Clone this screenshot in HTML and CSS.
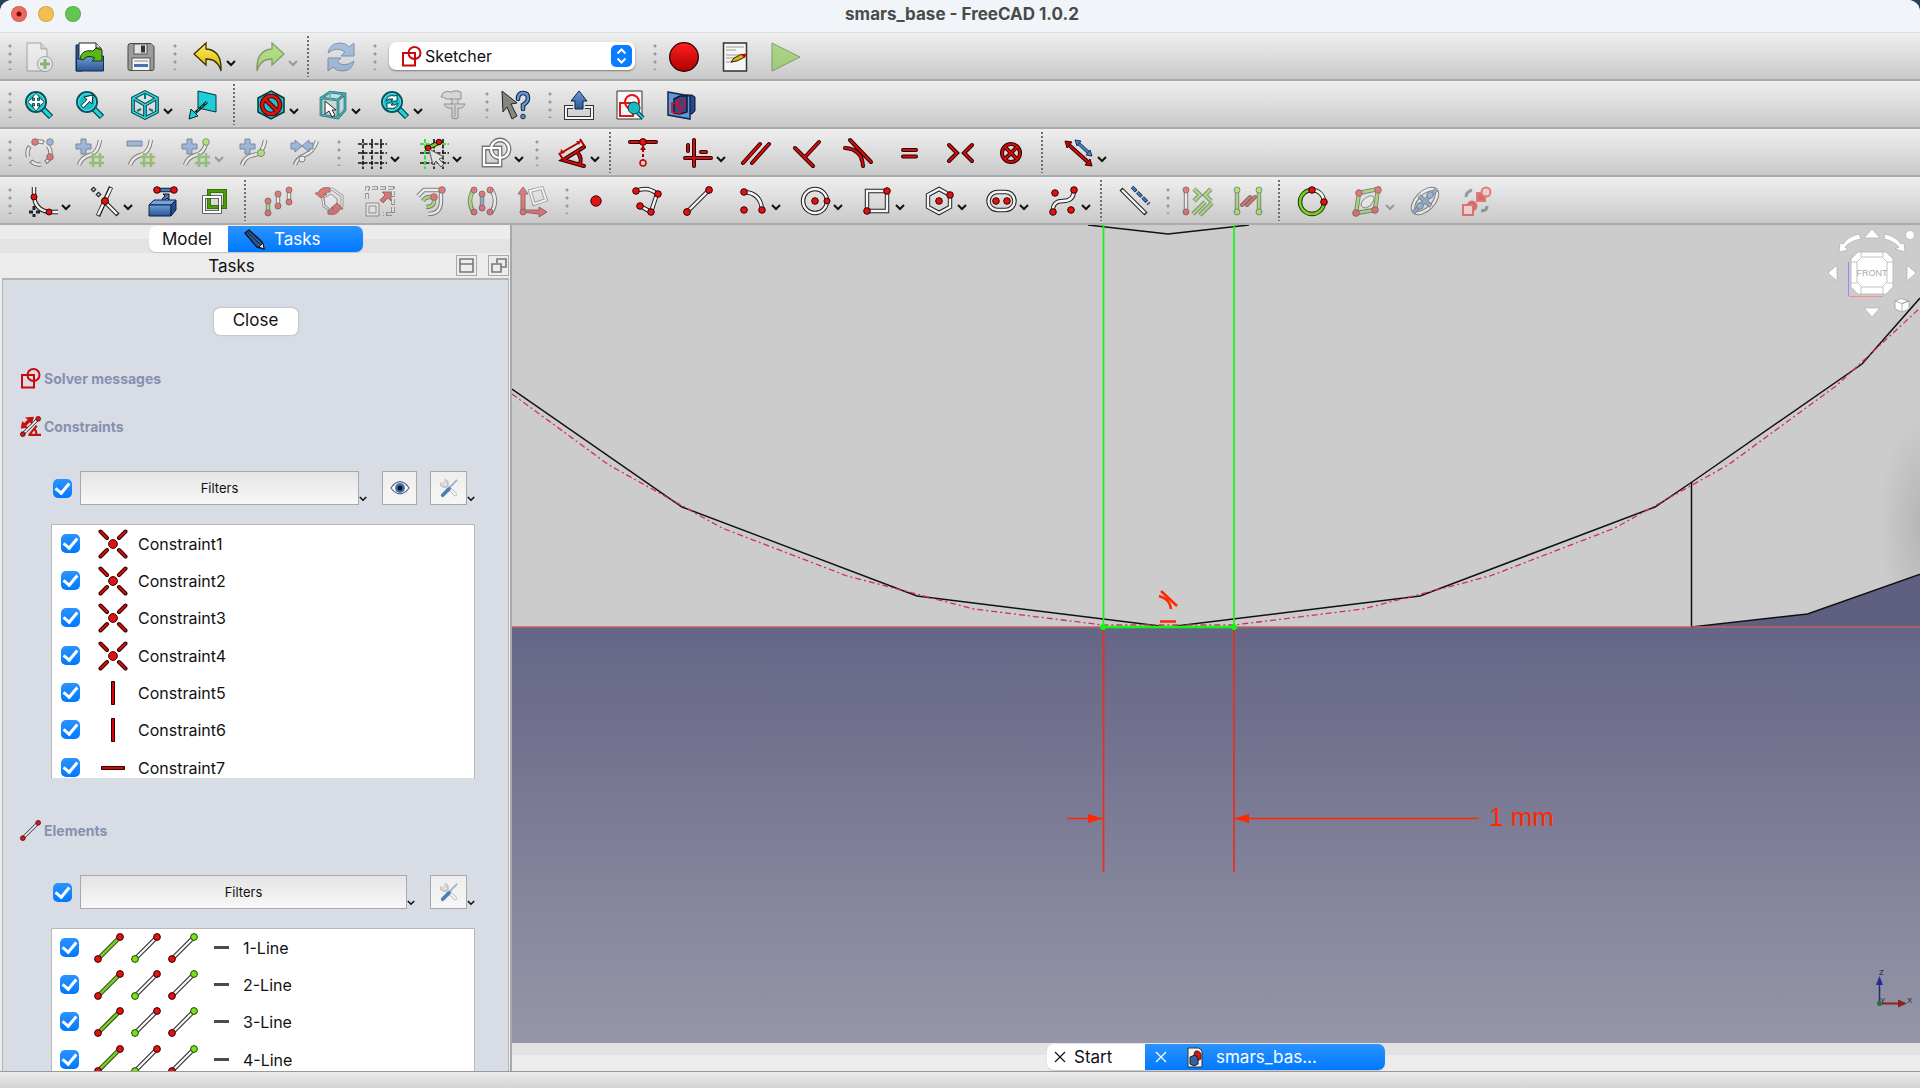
FILE: index.html
```html
<!DOCTYPE html>
<html lang="en">
<head>
<meta charset="utf-8">
<title>smars_base - FreeCAD 1.0.2</title>
<link rel="stylesheet" href="styles.css">
</head>
<body>
<svg class="defs" aria-hidden="true">
  <defs>
    <linearGradient id="red" x1="0" y1="0" x2="0" y2="1"><stop offset="0" stop-color="#ff2020"/><stop offset="1" stop-color="#b00000"/></linearGradient>
    <linearGradient id="yellow" x1="0" y1="0" x2="0" y2="1"><stop offset="0" stop-color="#fcee60"/><stop offset="1" stop-color="#d8b400"/></linearGradient>
    <linearGradient id="blue" x1="0" y1="0" x2="0" y2="1"><stop offset="0" stop-color="#6d9fd8"/><stop offset="1" stop-color="#2c5594"/></linearGradient>
    <linearGradient id="sky" x1="0" y1="0" x2="0" y2="1"><stop offset="0" stop-color="#656586"/><stop offset="1" stop-color="#9696a9"/></linearGradient>
    <radialGradient id="shade"><stop offset="0" stop-color="#b4b4b4"/><stop offset="1" stop-color="#cccccc"/></radialGradient>
  </defs>
  <symbol id="chev" viewBox="0 0 10 7"><path d="M1 1l4 4 4-4" fill="none" stroke="currentColor" stroke-width="2"/></symbol>
  <symbol id="sketcher" viewBox="0 0 21 21"><g fill="none" stroke="#c8090e" stroke-width="2"><path d="M2 7h12v12.500h-12z"/><circle cx="13.500" cy="7" r="6"/></g></symbol>
  <symbol id="i-line" viewBox="0 0 30 30"><path class="k5" d="M4 26L26 4"/><path class="w3" d="M4 26L26 4"/><circle class="dr" cx="4" cy="26" r="3.400"/><circle class="dr" cx="26" cy="4" r="3.400"/></symbol>
  <symbol id="i-edge" viewBox="0 0 30 30"><path class="k5" d="M4 26L26 4"/><path class="g3" d="M4 26L26 4"/><circle class="dr" cx="4" cy="26" r="3.400"/><circle class="dr" cx="26" cy="4" r="3.400"/></symbol>
  <symbol id="i-start" viewBox="0 0 30 30"><path class="k5" d="M4 26L26 4"/><path class="w3" d="M4 26L26 4"/><circle class="dg" cx="4" cy="26" r="3.400"/><circle class="dr" cx="26" cy="4" r="3.400"/></symbol>
  <symbol id="i-end" viewBox="0 0 30 30"><path class="k5" d="M4 26L26 4"/><path class="w3" d="M4 26L26 4"/><circle class="dr" cx="4" cy="26" r="3.400"/><circle class="dg" cx="26" cy="4" r="3.400"/></symbol>
  <symbol id="i-coin" viewBox="0 0 30 30"><path class="k4" d="M2.500 2.500l6.500 6.500M27.500 2.500l-6.500 6.500M2.500 27.500l6.500-6.500M27.500 27.500l-6.500-6.500"/><path class="r2" d="M2.500 2.500l6.500 6.500M27.500 2.500l-6.500 6.500M2.500 27.500l6.500-6.500M27.500 27.500l-6.500-6.500"/><circle class="dr" cx="15" cy="15" r="4.400"/></symbol>
  <symbol id="i-vert" viewBox="0 0 30 30"><path d="M13.500 3.500h3v23h-3z" fill="#d00" stroke="#2a0000"/></symbol>
  <symbol id="i-horz" viewBox="0 0 30 30"><path d="M3.500 13.500h23v3h-23z" fill="#d00" stroke="#2a0000"/></symbol>
  <symbol id="i-tools" viewBox="0 0 22 22"><path d="M6 6l12 12" stroke="#b8b8b8" stroke-width="4" stroke-linecap="round"/><path d="M6 6l12 12" stroke="#f2f2f2" stroke-width="2.500" stroke-linecap="round"/><path d="M2 5a4 4 0 1 0 4-3" fill="none" stroke="#c4c4c4" stroke-width="2"/><path d="M20 2l-9 9" stroke="#9ab4cc" stroke-width="2"/><path d="M11 12l-7 7" stroke="#4c7db8" stroke-width="4" stroke-linecap="round"/></symbol>
  <symbol id="magnifier" viewBox="0 0 30 30"><path d="M18 18l9 9" stroke="#043c40" stroke-width="6"/><path d="M18 18l8.500 8.500" stroke="#20d3dc" stroke-width="3.500"/><circle cx="12" cy="12" r="10" fill="#18bcc6" stroke="#06565c" stroke-width="2"/><circle cx="12" cy="12" r="8.500" fill="none" stroke="#5ee6ea"/></symbol>
</svg>

<div class="window">
<header class="titlebar">
  <div class="lights"><button class="light close" aria-label="Close window"></button><button class="light min" aria-label="Minimize"></button><button class="light max" aria-label="Zoom"></button></div>
  <h1>smars_base - FreeCAD 1.0.2</h1>
</header>

<nav class="toolbars">
  <div class="bar">
    <i class="handle"></i>
    <button class="tool" aria-label="New"><svg class="off" viewBox="0 0 30 30"><path d="M3 1h14l6 6v22h-20z" fill="#f6f6f6" stroke="#666"/><path d="M17 1v6h6" fill="#ccc" stroke="#666"/><circle cx="21" cy="22" r="7.500" fill="#f4f4f4" stroke="#666"/><path d="M21 17v10M16 22h10" stroke="#4b8a22" stroke-width="3"/></svg></button>
    <button class="tool" aria-label="Open"><svg viewBox="0 0 30 30"><path d="M1 3h6v26h-6z" fill="#2a5695" stroke="#0c2b52"/><path d="M4 1h17l5 5v14h-22z" fill="#fff" stroke="#222"/><path d="M21 1v5h5" fill="#ddd" stroke="#222"/><path d="M1.500 29v-12h8l2-3h17v15z" fill="url(#blue)" stroke="#0f2d5a"/><path d="M5 17q1-10 13-8l3-3 6 2v11h-10l3-3q-8-4-12 2z" fill="#5cb615" stroke="#173c00"/></svg></button>
    <button class="tool" aria-label="Save"><svg viewBox="0 0 30 30"><path d="M2 4q0-2.500 2.500-2.500h20.500l3 3v22q0 2-2 2h-22q-2 0-2-2z" fill="#9b9e98" stroke="#444"/><rect x="8" y="2" width="13" height="10" fill="#e3e3e3" stroke="#555"/><rect x="15" y="3.500" width="4" height="7" fill="#333"/><rect x="6" y="16" width="18" height="12.500" fill="#f4f4f4" stroke="#555"/><path d="M8 19h14" stroke="#888"/><path d="M8 23.500h14" stroke="#4673b0" stroke-width="3"/></svg></button>
    <i class="handle"></i>
    <button class="tool menu" aria-label="Undo"><svg viewBox="0 0 30 30"><path d="M1 12L13 1v6q16 1 15 22-3-12-15-12v6z" fill="url(#yellow)" stroke="#3a3000" stroke-width="1.300"/></svg><svg class="chev"><use href="#chev"/></svg></button>
    <button class="tool menu" aria-label="Redo"><svg class="off" viewBox="0 0 30 30"><path d="M29 12L17 1v6Q1 8 2 29q3-12 15-12v6z" fill="#7edb26" stroke="#2b5a05" stroke-width="1.300"/></svg><svg class="chev off"><use href="#chev"/></svg></button>
    <i class="sep"></i>
    <button class="tool" aria-label="Refresh"><svg class="off" viewBox="0 0 30 30"><path d="M2 11Q4 1 14 1q6 0 9 4l5-4v13h-13l4-4Q11 4 2 11zM28 19q-2 10-12 10-6 0-9-4l-5 4v-13h13l-4 4q8 6 17-1z" fill="#6d9ad0" stroke="#1d4a87"/></svg></button>
    <i class="handle"></i>
    <div class="combo"><svg class="ic21"><use href="#sketcher"/></svg><select aria-label="Workbench"><option>Sketcher</option></select><svg class="stepper" viewBox="0 0 21 22"><rect width="21" height="22" rx="5" fill="#0a7cff"/><path d="M6.500 8.500l4-4 4 4M6.500 13.500l4 4 4-4" fill="none" stroke="#fff" stroke-width="2"/></svg></div>
    <i class="handle"></i>
    <button class="tool" aria-label="Record macro"><svg viewBox="0 0 30 30"><circle cx="15" cy="15" r="14.300" fill="url(#red)" stroke="#280000" stroke-width="1.300"/></svg></button>
    <button class="tool" aria-label="Macros"><svg viewBox="0 0 30 30"><rect x="3.500" y="1" width="23" height="28" fill="#f5f5f3" stroke="#333" stroke-width="1.500"/><path d="M6 5h18M6 8h10M6 13h18M6 16h12M6 20h7" stroke="#999"/><path d="M11 20l3-4 8-4 3 3-8 4z" fill="#e0b400" stroke="#222"/><path d="M21 12.500l4-1 2 2-3 2z" fill="#c00"/></svg></button>
    <button class="tool" aria-label="Execute macro"><svg class="off" viewBox="0 0 30 30"><path d="M1 1v28l28-14z" fill="#73c52a" stroke="#2a5a06"/></svg></button>
  </div>

  <div class="bar">
    <i class="handle"></i>
    <button class="tool" aria-label="Fit all"><svg viewBox="0 0 30 30"><use href="#magnifier"/><path d="M12 3l4 5h-2.500v2.500h2v-2.500l5 4-5 4v-2.500h-2v2.500h2.500l-4 5-4-5h2.500v-2.500h-2v2.500l-5-4 5-4v2.500h2v-2.500h-2.500z" fill="#fff" stroke="#033" stroke-width=".8"/></svg></button>
    <button class="tool" aria-label="Fit selection"><svg viewBox="0 0 30 30"><use href="#magnifier"/><path d="M18 5l-1 9-2.500-2.500-6 6.500-2.500-2.500 6-6-3-2.500z" fill="#fff" stroke="#022"/></svg></button>
    <button class="tool menu" aria-label="Standard views"><svg viewBox="0 0 30 30"><g fill="none" stroke="#033c42" stroke-width="3.600"><path d="M15 2l12 6v14l-12 6-12-6v-14zM3 8l12 7 12-7M15 15v13"/></g><g fill="none" stroke="#2cd0d8" stroke-width="1.600"><path d="M15 2l12 6v14l-12 6-12-6v-14zM3 8l12 7 12-7M15 15v13"/></g><path d="M15 3v6M7 21l4-2M23 21l-4-2" stroke="#067a82" stroke-width="2"/></svg><svg class="chev"><use href="#chev"/></svg></button>
    <button class="tool" aria-label="Align to selection"><svg viewBox="0 0 30 30"><path d="M10 1l18 4v17l-18-4z" fill="#1fcdd6" stroke="#034"/><path d="M19 12L7 23" stroke="#022" stroke-width="3"/><path d="M19 12L7 23" stroke="#2dd" stroke-dasharray="3 2"/><path d="M1 29l2-10 7 7z" fill="#1fcdd6" stroke="#022"/></svg></button>
    <i class="sep"></i>
    <button class="tool menu" aria-label="Draw style"><svg viewBox="0 0 30 30"><path d="M15 1l13 7v14l-13 7-13-7v-14z" fill="#1cc2cc" stroke="#02363a" stroke-width="1.500"/><g fill="none"><circle cx="15" cy="15" r="9" stroke="#3a0000" stroke-width="4.600"/><path d="M9 9l12 12" stroke="#3a0000" stroke-width="4.600"/><circle cx="15" cy="15" r="9" stroke="#e01010" stroke-width="2.800"/><path d="M9 9l12 12" stroke="#e01010" stroke-width="2.800"/></g></svg><svg class="chev"><use href="#chev"/></svg></button>
    <button class="tool menu" aria-label="Bounding box"><svg viewBox="0 0 30 30"><path d="M3 8l9-6 15 2v16l-7 8-17-3z" fill="#b4d4d4" opacity=".5"/><g fill="none" stroke="#245c60" stroke-width="2.600"><path d="M3 8l9-6 15 2v16l-7 8-17-3zM3 8l17 2 7-6M20 10v18"/></g><g fill="none" stroke="#43b4ba" stroke-width="1.400"><path d="M3 8l9-6 15 2v16l-7 8-17-3zM3 8l17 2 7-6M20 10v18M12 2v8"/></g><path d="M7 11l11 9h-4l3 5-3 2-3-6-4 3z" fill="#fff" stroke="#222"/></svg><svg class="chev"><use href="#chev"/></svg></button>
    <button class="tool menu" aria-label="Zoom tools"><svg viewBox="0 0 30 30"><use href="#magnifier"/><path d="M6 11q2-7 9-5l2-1v6h-6l2-2q-4-1-7 2zM18 13q-2 7-9 5l-2 1v-6h6l-2 2q4 1 7-2z" fill="#fff" stroke="#044"/></svg><svg class="chev"><use href="#chev"/></svg></button>
    <button class="tool" aria-label="Measure"><svg class="off" viewBox="0 0 30 30"><path d="M5 3q4-3 8-1h2v-1h6v1h2v7h-3v5h7q-2 5-7 4v10l-2 1-4-1v-10q-6 1-8-4h8v-5h-6q-2-2-5-2z" fill="#ccc" stroke="#444"/><path d="M12 9h8M12 14h8M17 15v12" stroke="#555"/></svg></button>
    <i class="handle"></i>
    <button class="tool" aria-label="What's this"><svg viewBox="0 0 30 30"><path d="M1 1l15 12-6 1 6 12-5 3-5-12-4 5z" fill="#85877f" stroke="#222"/><g fill="none" stroke-linecap="round"><path d="M17 9q0-6 5-6t5 5q0 4-5 7v4" stroke="#122c50" stroke-width="4.600"/><path d="M17 9q0-6 5-6t5 5q0 4-5 7v4" stroke="#6c97d0" stroke-width="2.400"/></g><circle cx="22" cy="26.500" r="2.300" fill="#5a8ac8" stroke="#122c50"/></svg></button>
    <i class="handle"></i>
    <button class="tool" aria-label="Leave sketch"><svg viewBox="0 0 30 30"><path d="M9 17h-7v11h26v-11h-7" fill="none" stroke="#333" stroke-width="4"/><path d="M9 17h-7v11h26v-11h-7" fill="none" stroke="#f5f5f5" stroke-width="2"/><path d="M15 1l8 10h-4v8h-8v-8h-4z" fill="url(#blue)" stroke="#0b2448"/></svg></button>
    <button class="tool" aria-label="View sketch"><svg viewBox="0 0 30 30"><path d="M2 1h25v28h-25z" fill="#f7f7f7" stroke="#333"/><g fill="none" stroke="#e01515" stroke-width="2"><circle cx="17" cy="12" r="7"/><path d="M5 13h13v13h-13z"/></g><path d="M21 21l7 7" stroke="#033" stroke-width="4"/><path d="M21 21l7 7" stroke="#2cd" stroke-width="2"/><circle cx="19" cy="18" r="6" fill="#1bb8c2" stroke="#044"/></svg></button>
    <button class="tool" aria-label="View section"><svg viewBox="0 0 30 30"><path d="M20 5h6l3 2v14l-3 3h-6z" fill="#22488a" stroke="#0a1a38"/><path d="M2 2l22 4v23l-22-4z" fill="#6497d2" stroke="#0e2a50" stroke-width="1.500"/><path d="M8 9l6-3h7v16l-7 2-6-1z" fill="#2a4f91" stroke="#0a1a38" stroke-width="1.500"/><g fill="none" stroke="#d0102a" stroke-width="1.700"><path d="M6 13l8 1v9l-8-1z"/><ellipse cx="15" cy="14" rx="4" ry="5"/></g></svg></button>
  </div>

  <div class="bar">
    <i class="handle"></i>
    <button class="tool" aria-label="B-spline convert"><svg class="off" viewBox="0 0 30 30"><circle class="k5" cx="15" cy="15" r="11.500" stroke-dasharray="11 5"/><circle class="w3" cx="15" cy="15" r="11.500" stroke-dasharray="10 6"/><circle class="dr" cx="11" cy="4" r="3.300"/><circle class="db" cx="26" cy="4" r="3.300"/><circle class="dr" cx="26" cy="19" r="3.300"/></svg></button>
    <button class="tool" aria-label="Increase degree"><svg class="off" viewBox="0 0 30 30"><path class="k5" d="M4 27q3-8 11-10t10-15"/><path class="w3" d="M4 27q3-8 11-10t10-15"/><path class="bl" d="M6 1h5v5h5v5h-5v5h-5v-5h-5v-5h5z"/><path class="hash" d="M18 15v14M25 15v14M14 19h15M14 25h15"/></svg></button>
    <button class="tool" aria-label="Decrease degree"><svg class="off" viewBox="0 0 30 30"><path class="k5" d="M4 27q3-8 11-10t10-15"/><path class="w3" d="M4 27q3-8 11-10t10-15"/><path class="bl" d="M1 3h15v5h-15z"/><path class="hash" d="M18 15v14M25 15v14M14 19h15M14 25h15"/></svg></button>
    <button class="tool menu" aria-label="Increase multiplicity"><svg class="off" viewBox="0 0 30 30"><path class="k5" d="M4 27q3-8 11-10t10-12"/><path class="w3" d="M4 27q3-8 11-10t10-12"/><path class="bl" d="M6 1h5v5h5v5h-5v5h-5v-5h-5v-5h5z"/><circle class="dg" cx="25" cy="4" r="3.300"/><path class="hash" d="M18 15v14M25 15v14M14 19h15M14 25h15"/></svg><svg class="chev off"><use href="#chev"/></svg></button>
    <button class="tool" aria-label="Insert knot"><svg class="off" viewBox="0 0 30 30"><path class="k5" d="M3 27q3-9 12-10t11-15"/><path class="w3" d="M3 27q3-9 12-10t11-15"/><path class="bl" d="M6 1h5v5h5v5h-5v5h-5v-5h-5v-5h5z"/><circle class="dg" cx="22" cy="15" r="3.600"/></svg></button>
    <button class="tool" aria-label="Join curves"><svg class="off" viewBox="0 0 30 30"><path class="k5" d="M5 27q2-7 10-10t12-14"/><path class="w3" d="M5 27q2-7 10-10t12-14"/><path class="bl" d="M1 5h4v-3l7 6-7 6v-3h-4zM23 5h-4v-3l-7 6 7 6v-3h4z"/><circle cx="12" cy="21" r="3" fill="#fff" stroke="#333"/></svg></button>
    <i class="handle"></i>
    <button class="tool menu" aria-label="Toggle grid"><svg viewBox="0 0 30 30"><path d="M6 1v30M15 1v30M24 1v30M1 6h29M1 15h29M1 25h29" stroke="#111" stroke-width="1.600" stroke-dasharray="4 1.500"/></svg><svg class="chev"><use href="#chev"/></svg></button>
    <button class="tool menu" aria-label="Toggle snap"><svg viewBox="0 0 30 30"><path d="M15 1v30M24 1v30M1 15h29M1 25h29" stroke="#111" stroke-width="1.600" stroke-dasharray="4 1.500"/><path d="M6 1v30M1 6h29" stroke="#10e010" stroke-width="1.600" stroke-dasharray="4 1.500"/><path class="k5" d="M9 10l10-5"/><path class="g3" d="M9 10l10-5"/><circle class="dr" cx="9" cy="10" r="2.800"/><circle class="dr" cx="20" cy="4" r="2.800"/><path d="M10 11l15 8-5 2 5 5-3 3-5-6-3 4z" fill="#e0e0da" stroke="#555"/></svg><svg class="chev"><use href="#chev"/></svg></button>
    <button class="tool menu" aria-label="Rendering order"><svg viewBox="0 0 30 30"><g fill="none" stroke="#777" stroke-width="4.800"><path d="M3 10h16v17h-16z"/><circle cx="19" cy="11" r="9"/></g><g fill="none" stroke="#fff" stroke-width="2.200"><path d="M3 10h16v17h-16z"/><circle cx="19" cy="11" r="9"/></g></svg><svg class="chev"><use href="#chev"/></svg></button>
    <i class="handle"></i>
    <button class="tool menu wide" aria-label="Dimension"><svg viewBox="0 0 30 30"><path class="k4" d="M27 9L6 22l21 6M21 15q4 5 2 11"/><path class="r2" d="M27 9L6 22l21 6M21 15q4 5 2 11"/><path d="M2 15l5 8M23 1l5 8M4 15l19-11" fill="none" stroke="#a00" stroke-width="2"/><path d="M3 16l1-5 4 4zM24 3l-5 0 3 4z" fill="#c00"/></svg><svg class="chev"><use href="#chev"/></svg></button>
    <i class="sep"></i>
    <button class="tool" aria-label="Point on object"><svg viewBox="0 0 30 30"><path class="k4" d="M2 4h26"/><path class="r2" d="M2 4h26"/><circle class="dr" cx="15" cy="4" r="3.400"/><path d="M15 11v11" stroke="#a00" stroke-width="2" stroke-dasharray="3 2"/><path d="M12 12l3-5 3 5z" fill="#a00"/><circle cx="15" cy="25" r="3" fill="none" stroke="#c00" stroke-width="1.500"/></svg></button>
    <button class="tool menu" aria-label="Horizontal or vertical"><svg viewBox="0 0 30 30"><path class="k4" d="M11 2v26M2 20h26M5 7v6M18 14h5"/><path class="r2" d="M11 2v26M2 20h26M5 7v6M18 14h5"/></svg><svg class="chev"><use href="#chev"/></svg></button>
    <button class="tool" aria-label="Parallel"><svg viewBox="0 0 30 30"><path class="k4" d="M2 25L19 6M11 25L28 6"/><path class="r2" d="M2 25L19 6M11 25L28 6"/></svg></button>
    <button class="tool" aria-label="Perpendicular"><svg viewBox="0 0 30 30"><path class="k4" d="M3 10l18 18M13 19L27 4"/><path class="r2" d="M3 10l18 18M13 19L27 4"/></svg></button>
    <button class="tool" aria-label="Tangent"><svg viewBox="0 0 30 30"><path class="k4" d="M7 2l21 22M2 10q17 1 18 18"/><path class="r2" d="M7 2l21 22M2 10q17 1 18 18"/></svg></button>
    <button class="tool" aria-label="Equal"><svg viewBox="0 0 30 30"><path class="k4" d="M9 12h13M9 18.500h13"/><path class="r2" d="M9 12h13M9 18.500h13"/></svg></button>
    <button class="tool" aria-label="Symmetric"><svg viewBox="0 0 30 30"><path class="k4" d="M4 7l8 8-8 8M27 7l-8 8 8 8"/><path class="r2" d="M4 7l8 8-8 8M27 7l-8 8 8 8"/></svg></button>
    <button class="tool" aria-label="Block"><svg viewBox="0 0 30 30"><path class="k4" d="M9 9l12 12M21 9L9 21"/><circle class="k4" cx="15" cy="15" r="9"/><path class="r2" d="M9 9l12 12M21 9L9 21"/><circle class="r2" cx="15" cy="15" r="9"/></svg></button>
    <i class="sep"></i>
    <button class="tool menu" aria-label="Toggle driving constraint"><svg viewBox="0 0 30 30"><path class="k4" d="M5 7l20 18"/><path class="r2" d="M5 7l20 18"/><path d="M1 3l7 1-5 6zM28 28l-7-1 5-6z" fill="#c00" stroke="#300"/><path d="M14 5l11 10" stroke="#16345f" stroke-width="3.500"/><path d="M14 5l11 10" stroke="#4d82c4" stroke-width="1.800"/><path d="M11 2l6 1-4 5zM28 18l-6-1 4-5z" fill="#4d82c4" stroke="#16345f"/></svg><svg class="chev"><use href="#chev"/></svg></button>
  </div>

  <div class="bar">
    <i class="handle"></i>
    <button class="tool menu" aria-label="Fillet"><svg viewBox="0 0 30 30"><path class="k5" d="M6 1v9q1 14 15 16h9"/><path class="w3" d="M6 1v9q1 14 15 16h9"/><path d="M1 26h4M8 26h4M6 20v4M6 28v3" stroke="#222" stroke-width="3"/><circle class="dr" cx="6" cy="11" r="3"/><circle class="dr" cx="21" cy="26" r="3"/></svg><svg class="chev"><use href="#chev"/></svg></button>
    <button class="tool menu" aria-label="Trim"><svg viewBox="0 0 30 30"><path class="k5" d="M21 1L8 30M14 15l14 14M2 2l3 3M7 7l3 3"/><path class="w3" d="M21 2L8 29M14 15l13 13M3 3l1 1M8 8l1 1"/><circle class="dr" cx="15" cy="15" r="3.500"/></svg><svg class="chev"><use href="#chev"/></svg></button>
    <button class="tool" aria-label="External geometry"><svg viewBox="0 0 30 30"><path class="k5" d="M10 4h16"/><path class="b3" d="M10 4h16"/><circle class="dr" cx="9" cy="4" r="3.300"/><circle class="dr" cx="26" cy="4" r="3.300"/><path d="M14 13l3-3-2-2h6v6l-2-2-3 3z" fill="#4a7cc0" stroke="#112"/><path d="M1 19l5-5h22l-5 5z" fill="#73a3dc" stroke="#0b2448"/><path d="M1 19h22v11h-22z" fill="url(#blue)" stroke="#0b2448"/><path d="M23 19l5-5v10l-5 6z" fill="#234c88" stroke="#0b2448"/></svg></button>
    <button class="tool" aria-label="Carbon copy"><svg viewBox="0 0 30 30"><path d="M10 5h16v16h-16z" fill="none" stroke="#2c6a05" stroke-width="4"/><path d="M10 5h16v16h-16z" fill="none" stroke="#4c9a06" stroke-width="2.600"/><path d="M5 11h16v15h-16z" fill="none" stroke="#444" stroke-width="3.600"/><path d="M5 11h16v15h-16z" fill="none" stroke="#fff" stroke-width="2"/></svg></button>
    <i class="sep"></i>
    <button class="tool" aria-label="Move"><svg class="off" viewBox="0 0 30 30"><path class="k5" d="M5 26v-11M15 19v-11M26 15v-11"/><path class="g3" d="M5 26v-11"/><path class="w3" d="M15 19v-11M26 15v-11"/><circle class="dr" cx="5" cy="27" r="3"/><circle class="dr" cx="5" cy="15" r="3"/><circle class="dr" cx="15" cy="20" r="3"/><circle class="dr" cx="15" cy="8" r="3"/><circle class="dr" cx="26" cy="16" r="3"/><circle class="dr" cx="26" cy="4" r="3"/></svg></button>
    <button class="tool" aria-label="Rotate"><svg class="off" viewBox="0 0 30 30"><path d="M8 8l10-5 10 7v10l-10 5-8-5z" fill="none" stroke="#555" stroke-width="3"/><path d="M8 8l10-5 10 7v10l-10 5-8-5z" fill="none" stroke="#fff" stroke-width="1.200"/><path d="M10 12l7-4 6 5v7l-7 3-5-4z" fill="#eee" stroke="#444"/><path d="M4 7q3-7 12-5v4q-5-1-6 2h3l-6 4-6-5zM26 23q-3 7-12 5v-4q5 1 6-2h-3l6-5 6 6z" fill="#e01010" stroke="#400"/></svg></button>
    <button class="tool" aria-label="Scale"><svg class="off" viewBox="0 0 30 30"><path d="M2 13v-11h26v26h-10" fill="none" stroke="#333" stroke-width="3.500" stroke-dasharray="6 2"/><path d="M2 13v-11h26v26h-10" fill="none" stroke="#fff" stroke-width="1.700" stroke-dasharray="5 3"/><path d="M1 17h13v13h-13zM4 20h7v7h-7z" fill="#eee" stroke="#444"/><path d="M15 14l5-5-3-3h9v9l-3-3-5 5z" fill="#d01010" stroke="#400"/></svg></button>
    <button class="tool" aria-label="Offset"><svg class="off" viewBox="0 0 30 30"><path class="k5" d="M2 10l6-6h17v11q0 13-13 13"/><path class="w3" d="M2 10l6-6h17v11q0 13-13 13"/><path class="k5" d="M7 15q2-4 7-4h4v4q0 6-8 6"/><path class="g3" d="M7 15q2-4 7-4h4v4q0 6-8 6"/><circle class="dr" cx="26" cy="4" r="3.300"/><circle class="dr" cx="18" cy="11" r="3.300"/></svg></button>
    <button class="tool" aria-label="Symmetry"><svg class="off" viewBox="0 0 30 30"><path class="k5" d="M7 3q-8 12 0 24M24 3q8 12 0 24M15 8v14"/><path class="g3" d="M7 3q-8 12 0 24"/><path class="w3" d="M24 3q8 12 0 24"/><path class="b3" d="M15 8v14"/><circle class="dr" cx="7" cy="4" r="3"/><circle class="dr" cx="7" cy="26" r="3"/><circle class="dr" cx="23" cy="4" r="3"/><circle class="dr" cx="23" cy="26" r="3"/><circle class="dr" cx="15" cy="8" r="3"/><circle class="dr" cx="15" cy="22" r="3"/></svg></button>
    <button class="tool" aria-label="Axes alignment"><svg class="off" viewBox="0 0 30 30"><path d="M3 26v-18h-3l5-7 5 7h-3v16h14v-3l8 5-8 5v-3z" fill="#e01515" stroke="#400"/><path d="M12 5l12-3 4 12-12 4z" fill="none" stroke="#444" stroke-width="3.500"/><path d="M12 5l12-3 4 12-12 4z" fill="none" stroke="#fff" stroke-width="2"/><circle class="dr" cx="5" cy="26" r="3"/></svg></button>
    <i class="handle"></i>
    <button class="tool" aria-label="Point"><svg viewBox="0 0 30 30"><circle class="dr" cx="15" cy="15" r="5.200"/></svg></button>
    <button class="tool" aria-label="Polyline"><svg viewBox="0 0 30 30"><path class="k5" d="M4 5q12-5 21 3l-6 18-11-6"/><path class="w3" d="M4 5q12-5 21 3l-6 18-11-6"/><circle class="dr" cx="4" cy="5" r="3.300"/><circle class="dr" cx="26" cy="8" r="3.300"/><circle class="dr" cx="19" cy="26" r="3.300"/><circle class="dr" cx="8" cy="20" r="3.300"/></svg></button>
    <button class="tool" aria-label="Line"><svg><use href="#i-line"/></svg></button>
    <button class="tool menu" aria-label="Arc"><svg viewBox="0 0 30 30"><path class="k5" d="M6 6q17 1 18 18"/><path class="w3" d="M6 6q17 1 18 18"/><circle class="dr" cx="6" cy="6" r="3.300"/><circle class="dr" cx="6" cy="24" r="3.300"/><circle class="dr" cx="24" cy="24" r="3.300"/></svg><svg class="chev"><use href="#chev"/></svg></button>
    <button class="tool menu" aria-label="Circle"><svg viewBox="0 0 30 30"><circle class="k5" cx="15" cy="15" r="12"/><circle class="w3" cx="15" cy="15" r="12"/><circle class="dr" cx="15" cy="15" r="3.300"/><circle class="dr" cx="27" cy="15" r="3"/></svg><svg class="chev"><use href="#chev"/></svg></button>
    <button class="tool menu" aria-label="Rectangle"><svg viewBox="0 0 30 30"><path class="k5" d="M5 5h20v20h-20z"/><path class="w3" d="M5 5h20v20h-20z"/><circle class="dr" cx="25" cy="5" r="3.300"/><circle class="dr" cx="5" cy="25" r="3.300"/></svg><svg class="chev"><use href="#chev"/></svg></button>
    <button class="tool menu" aria-label="Polygon"><svg viewBox="0 0 30 30"><path class="k5" d="M15 3l11 6v12l-11 6-11-6v-12z"/><path class="w3" d="M15 3l11 6v12l-11 6-11-6v-12z"/><circle class="dr" cx="15" cy="15" r="3.300"/><circle class="dr" cx="26" cy="9" r="3.300"/></svg><svg class="chev"><use href="#chev"/></svg></button>
    <button class="tool menu" aria-label="Slot"><svg viewBox="0 0 30 30"><rect class="k5" x="2.500" y="6" width="26" height="18" rx="9"/><rect class="w3" x="2.500" y="6" width="26" height="18" rx="9"/><circle class="dr" cx="10" cy="15" r="3.300"/><circle class="dr" cx="21" cy="15" r="3.300"/></svg><svg class="chev"><use href="#chev"/></svg></button>
    <button class="tool menu" aria-label="B-spline"><svg viewBox="0 0 30 30"><path class="k5" d="M5 26q-1-11 10-11t11-11"/><path class="w3" d="M5 26q-1-11 10-11t11-11"/><circle class="dr" cx="5" cy="26" r="3.300"/><circle class="dr" cx="7" cy="7" r="3.300"/><circle class="dr" cx="26" cy="4" r="3.300"/><circle class="dr" cx="23" cy="24" r="3.300"/></svg><svg class="chev"><use href="#chev"/></svg></button>
    <i class="sep"></i>
    <button class="tool" aria-label="Toggle construction"><svg viewBox="0 0 30 30"><path class="k5" d="M2 3l25 25"/><path class="w3" d="M3 4l23 23"/><path d="M13 1l17 17" stroke="#12294d" stroke-width="3.500" stroke-dasharray="6 1.500"/><path d="M13 1l17 17" stroke="#4a7cc0" stroke-width="2" stroke-dasharray="5 2.500"/></svg></button>
    <i class="handle"></i>
    <button class="tool" aria-label="Select constraints"><svg class="off" viewBox="0 0 30 30"><path class="k5" d="M4 4v23M12 3l6 6-6 6M29 3l-6 6 6 6M11 28l12-12M18 29l12-12"/><path class="w3" d="M4 4v23"/><path class="g3" d="M12 3l6 6-6 6M29 3l-6 6 6 6M11 28l12-12M18 29l12-12"/><circle class="dr" cx="4" cy="4" r="3"/><circle class="dr" cx="4" cy="26" r="3"/></svg></button>
    <button class="tool" aria-label="Select associated geometry"><svg class="off" viewBox="0 0 30 30"><path class="k5" d="M4 4v23M26 4v23"/><path class="g3" d="M4 4v23M26 4v23"/><path class="k4" d="M9 19l8-8M14 19l8-8"/><path class="r2" d="M9 19l8-8M14 19l8-8"/><circle class="dg" cx="4" cy="4" r="3"/><circle class="dg" cx="4" cy="26" r="3"/><circle class="dg" cx="26" cy="4" r="3"/><circle class="dg" cx="26" cy="26" r="3"/></svg></button>
    <i class="sep"></i>
    <button class="tool" aria-label="Select unconstrained"><svg viewBox="0 0 30 30"><circle class="k5" cx="15" cy="16" r="12"/><circle class="g3" cx="15" cy="16" r="12"/><path class="w3" d="M17 4q9 2 10 11"/><circle class="dr" cx="15" cy="4" r="3.300"/><circle class="dr" cx="27" cy="16" r="3.300"/></svg></button>
    <button class="tool menu" aria-label="Internal geometry"><svg class="off" viewBox="0 0 30 30"><path class="k5" d="M7 7l19-4-3 21-19 3z"/><path class="g3" d="M7 7l19-4-3 21-19 3z"/><path d="M9 19q0-5 8-9 6-1 5 4-2 6-8 8-4 0-5-3z" fill="#eee" stroke="#333"/><circle class="dr" cx="7" cy="7" r="3.300"/><circle class="dr" cx="26" cy="4" r="3.300"/><circle class="dr" cx="23" cy="24" r="3.300"/><circle class="dr" cx="4" cy="27" r="3.300"/></svg><svg class="chev off"><use href="#chev"/></svg></button>
    <button class="tool" aria-label="Ellipse geometry"><svg class="off" viewBox="0 0 30 30"><ellipse class="k5" cx="15" cy="15" rx="15" ry="8" transform="rotate(-45 15 15)"/><ellipse class="w3" cx="15" cy="15" rx="15" ry="8" transform="rotate(-45 15 15)"/><path class="k5" d="M3 27L27 3M9 10l12 10"/><path class="b3" d="M3 27L27 3M9 10l12 10"/><circle class="db" cx="10" cy="20" r="3.300"/><circle class="db" cx="20" cy="9" r="3.300"/></svg></button>
    <button class="tool" aria-label="Switch space"><svg class="off" viewBox="0 0 30 30"><path d="M16 7h8v8h-8z" fill="#c00" stroke="#e01515" stroke-width="2"/><circle cx="25" cy="6" r="4.500" fill="#fbb" stroke="#e01515" stroke-width="2"/><circle cx="11" cy="20" r="5" fill="#c00" stroke="#e01515"/><path d="M2 19h10v10h-10z" fill="#fcc" stroke="#e01515" stroke-width="2"/><path d="M5 11q0-5 6-7M26 20q0 5-6 5" fill="none" stroke="#555" stroke-width="3"/></svg></button>
  </div>
</nav>

<main class="work">
  <aside class="side">
    <div class="tabs top" role="tablist">
      <button class="tab" role="tab">Model</button><button class="tab on" role="tab"><svg class="ic21" viewBox="0 0 21 21"><path d="M1 4l4-3 13 12 2 7-7-2z" fill="#2f5b99" stroke="#10182a" stroke-width="1.500"/><path d="M3 2.500l13 13" stroke="#10182a"/><path d="M15 18l4-4 1 6z" fill="#eee" stroke="#111"/></svg>Tasks</button>
    </div>
    <div class="dock"><h2>Tasks</h2>
      <button class="mini" aria-label="Toggle overlay"><svg viewBox="0 0 19 19"><path d="M3 3h13v13h-13zM3 8h13" fill="none" stroke="#777" stroke-width="1.600"/></svg></button>
      <button class="mini" aria-label="Float"><svg viewBox="0 0 19 19"><path d="M8 7v-4h9v8h-5M3 8h9v8h-9z" fill="none" stroke="#777" stroke-width="1.600"/></svg></button>
    </div>
    <div class="frame">
      <button class="closebtn">Close</button>
      <h3><svg class="ic21"><use href="#sketcher"/></svg>Solver messages</h3>
      <h3><svg class="ic21" viewBox="0 0 30 30"><path class="k5" d="M4 26L26 4"/><path class="w3" d="M4 26L26 4"/><path d="M1 18l2-11 3 3 5-5-4-3 13-1-3 11-3-3-5 5 3 3z" fill="#c81010"/><path d="M12 27h18M13 27L24 14M20 18q4 3 3 9" fill="none" stroke="#c01010" stroke-width="3"/><circle class="dr" cx="4" cy="26" r="3.400"/><circle class="dr" cx="26" cy="4" r="3.400"/></svg>Constraints</h3>
      <div class="filters">
        <input type="checkbox" checked aria-label="Enable constraint filter">
        <button class="filter">Filters</button><svg class="chev"><use href="#chev"/></svg>
        <button class="sq eye" aria-label="Show or hide"><svg viewBox="0 0 22 22"><path d="M1 11q10-14 20 0-10 13-20 0z" fill="#fff" stroke="#567" stroke-width="1.300"/><circle cx="11" cy="11" r="5.500" fill="#3f73b8"/><circle cx="11" cy="11" r="2.800" fill="#112"/></svg></button>
        <button class="sq" aria-label="Constraint settings"><svg><use href="#i-tools"/></svg></button><svg class="chev"><use href="#chev"/></svg>
      </div>
      <ul class="list constraints">
        <li><label><input type="checkbox" checked><svg class="ic30"><use href="#i-coin"/></svg>Constraint1</label></li>
        <li><label><input type="checkbox" checked><svg class="ic30"><use href="#i-coin"/></svg>Constraint2</label></li>
        <li><label><input type="checkbox" checked><svg class="ic30"><use href="#i-coin"/></svg>Constraint3</label></li>
        <li><label><input type="checkbox" checked><svg class="ic30"><use href="#i-coin"/></svg>Constraint4</label></li>
        <li><label><input type="checkbox" checked><svg class="ic30"><use href="#i-vert"/></svg>Constraint5</label></li>
        <li><label><input type="checkbox" checked><svg class="ic30"><use href="#i-vert"/></svg>Constraint6</label></li>
        <li><label><input type="checkbox" checked><svg class="ic30"><use href="#i-horz"/></svg>Constraint7</label></li>
      </ul>
      <h3><svg class="ic21"><use href="#i-line"/></svg>Elements</h3>
      <div class="filters">
        <input type="checkbox" checked aria-label="Enable element filter">
        <button class="filter">Filters</button><svg class="chev"><use href="#chev"/></svg>
        <button class="sq" aria-label="Element settings"><svg><use href="#i-tools"/></svg></button><svg class="chev"><use href="#chev"/></svg>
      </div>
      <ul class="list elements">
        <li><label><input type="checkbox" checked><svg class="ic30"><use href="#i-edge"/></svg><svg class="ic30"><use href="#i-start"/></svg><svg class="ic30"><use href="#i-end"/></svg><i class="dash"></i>1-Line</label></li>
        <li><label><input type="checkbox" checked><svg class="ic30"><use href="#i-edge"/></svg><svg class="ic30"><use href="#i-start"/></svg><svg class="ic30"><use href="#i-end"/></svg><i class="dash"></i>2-Line</label></li>
        <li><label><input type="checkbox" checked><svg class="ic30"><use href="#i-edge"/></svg><svg class="ic30"><use href="#i-start"/></svg><svg class="ic30"><use href="#i-end"/></svg><i class="dash"></i>3-Line</label></li>
        <li><label><input type="checkbox" checked><svg class="ic30"><use href="#i-edge"/></svg><svg class="ic30"><use href="#i-start"/></svg><svg class="ic30"><use href="#i-end"/></svg><i class="dash"></i>4-Line</label></li>
      </ul>
    </div>
  </aside>

  <section class="doc">
    <svg class="view" viewBox="512 225 1408 819" preserveAspectRatio="xMaxYMin slice" role="img" aria-label="3D view">
      <rect x="512" y="225" width="1408" height="402" fill="#ccc"/>
      <ellipse cx="1924" cy="525" rx="46" ry="110" fill="url(#shade)"/>
      <rect x="512" y="627" width="1408" height="417" fill="url(#sky)"/>
      <path d="M1692 627l115-13 113-40v53z" fill="#5f5f82"/>
      <g fill="none" stroke="#111" stroke-width="1.500">
        <path d="M1088 225l80 9 81-9"/>
        <path d="M512 389l170 118 235 89 251 31 252-31 235-89 37-25 170-118 58-66"/>
        <path d="M1691.500 482v145l116-13 113-40"/>
      </g>
      <path d="M512 394l97 71 113 63 125 48 127 33 129 16h131l129-16 127-33 125-48 113-63 108-79 84-78" fill="none" stroke="#d42a72" stroke-width="1.300" stroke-dasharray="6 3 2 3"/>
      <path d="M512 627h1408" stroke="#c8605f" stroke-width="1.500"/>
      <g stroke="#e8301c" stroke-width="1.700"><path d="M1103.500 627v245M1234 627v245"/></g>
      <g stroke="#10f810" stroke-width="1.700"><path d="M1103.500 225v402M1234 225v402"/><path d="M1103 627h131" stroke-width="2.500"/></g>
      <circle cx="1103" cy="627" r="3" fill="#10f810"/><circle cx="1234" cy="627" r="3" fill="#10f810"/>
      <g fill="none" stroke="#ff2800"><path d="M1161 591l16 15M1159 596q11 3 12 13M1160 621.500h16" stroke-width="2.500"/><path d="M1067 818.500h36M1234 818.500h245" stroke-width="1.500"/></g>
      <path d="M1103 818.500l-15-4.500v9zM1234 818.500l15-4.500v9z" fill="#ff2800"/>
      <text class="dim" x="1489" y="826">1 mm</text>
      <g fill="#fff" stroke="#b4b4b4" stroke-width=".8">
        <path d="M1872 229l8 9h-16zM1872 317l8-9h-16zM1828 273l9-8v16zM1916 273l-9-8v16z"/>
        <path d="M1859 234l2 5q-11 2-16 8l3 3-9 2 1-9 3 1q6-8 16-10zM1885 234l-1 5q10 2 15 8l-4 2 10 3-1-9-3 1q-6-8-16-10z"/>
        <circle cx="1910" cy="235" r="4.500"/>
        <path d="M1858 252h28l7 7v28l-7 7h-28l-7-7v-28z"/><path d="M1862 257h20l5 5v20l-5 5h-20l-5-5v-20z"/><path d="M1861 252v5M1883 252v5M1861 294v-7M1883 294v-7M1851 262h6M1851 283h6M1893 262h-6M1893 283h-6"/>
        <path d="M1895 301l7 2.500 7-2.500v8l-7 3-7-3zM1895 301l6-2.500 8 2.500-7 2.500v8" stroke="#999"/>
      </g>
      <path d="M1848.500 262v34" stroke="#8d8df5"/><path d="M1849 296.500h34" stroke="#f88"/>
      <text class="front" x="1872" y="276">FRONT</text>
      <path d="M1879.500 1003v-22" stroke="#2b2b70" stroke-width="1.500"/><path d="M1879.500 976l-3.500 9h7z" fill="#2a2a90"/>
      <path d="M1880 1003.500h19" stroke="#8e2020" stroke-width="2"/><path d="M1907 1003.500l-9-4v8z" fill="#8e2020"/><circle cx="1879.500" cy="1003.500" r="2.500" fill="#1a7a30"/>
      <g class="axis"><text x="1879" y="975">Z</text><text x="1880" y="1003">Y</text><text x="1907" y="1003">X</text></g>
    </svg>
    <div class="tabs bottom" role="tablist">
      <button class="tab" role="tab"><svg class="x" viewBox="0 0 12 12"><path d="M1 1l10 10M11 1L1 11" stroke="currentColor" stroke-width="1.200"/></svg>Start</button><button class="tab on" role="tab"><svg class="x" viewBox="0 0 12 12"><path d="M1 1l10 10M11 1L1 11" stroke="currentColor" stroke-width="1.200"/></svg><svg class="file" viewBox="0 0 16 21"><path d="M1 1h11l3 3v16h-14z" fill="#f6f6f0" stroke="#333"/><path d="M7 8q0-5 4-4t3 8l-4 2z" fill="#d01818" stroke="#400" stroke-width=".7"/><path d="M3 10l5-2 3 3v6l-4 2-4-2z" fill="#37609c" stroke="#0a1c3a"/></svg>smars_bas...</button>
    </div>
  </section>
</main>
<footer class="status"></footer>
</div>
</body>
</html>
```
FILE: styles.css
```css
* { box-sizing: border-box; }
body { margin: 0; background: #24405f; font-family: Inter, "Liberation Sans", sans-serif; font-size: 16px; color: #111; }
button { font: inherit; color: inherit; padding: 0; border: 0; background: none; }
h1, h2, h3, ul { margin: 0; padding: 0; font: inherit; list-style: none; }
svg { display: block; flex: none; }
.defs { position: absolute; width: 0; height: 0; }
.window { height: 100vh; display: grid; grid-template-rows: auto auto minmax(0, 1fr) auto; background: #ececec; border-radius: 12px 12px 0 0; overflow: hidden; }

.titlebar { height: 33px; display: grid; grid-template-columns: 1fr auto 1fr; align-items: center; background: #f1f4f8; border-bottom: 1px solid #d9dcdf; padding-bottom: 4px; }
.titlebar h1 { font-size: 17px; font-weight: 700; color: #4a4a4a; line-height: 20px; padding-left: 4px; }
.lights { display: flex; gap: 11px; padding-left: 11px; }
.light { width: 16px; height: 16px; border-radius: 50%; border: 1px solid rgba(0, 0, 0, .12); }
.light.close { background: radial-gradient(circle, #70100c 2px, #ee6a5f 3px); }
.light.min { background: #f5bf4f; }
.light.max { background: #62c655; }

.bar { height: 48px; display: flex; align-items: center; padding-left: 1px; background: linear-gradient(#efefef, #c9c9c9); border-bottom: 2px solid #ababab; }
.handle { flex: none; width: 12px; height: 28px; background: radial-gradient(circle, #999 1px, transparent 2px) 5px 0 / 8px 8px repeat-y; }
.sep { flex: none; width: 13px; height: 42px; background: radial-gradient(circle, #555 0, #777 1px, transparent 1px) 4px 0 / 4px 4px repeat-y; }
.tool { flex: none; width: 51px; height: 42px; display: flex; align-items: center; justify-content: center; padding-top: 2px; }
.tool > svg { width: 30px; height: 30px; overflow: visible; }
.tool.menu { width: 62px; justify-content: flex-start; padding-left: 15px; gap: 3px; }
.tool.wide { width: 64px; padding-left: 17px; }
.tool > svg.chev, .chev { width: 10px; height: 7px; color: #111; }
.tool > .chev { margin-top: 13px; }
.tool > svg.off { opacity: .5; }
.tool > .chev.off { opacity: .3; }

.k5, .k4, .w3, .g3, .b3, .r2 { fill: none; }
.k5 { stroke: #222; stroke-width: 4.4px; }
.k4 { stroke: #240000; stroke-width: 4px; stroke-linecap: round; }
.w3 { stroke: #f6f6f6; stroke-width: 2.4px; }
.g3 { stroke: #73d216; stroke-width: 2.6px; }
.b3 { stroke: #4a7cc0; stroke-width: 2.6px; }
.r2 { stroke: #dc0a0a; stroke-width: 2px; stroke-linecap: round; }
.dr { fill: #e01212; stroke: #3a0000; }
.dg { fill: #7be01c; stroke: #1f4a00; }
.db { fill: #5a8cd0; stroke: #12305a; }
.bl { fill: #5a8cd0; stroke: #12305a; }
.hash { stroke: #58a81c; stroke-width: 2.6px; }

.combo { display: flex; align-items: center; width: 246px; height: 28px; margin: 0 11px; padding: 0 3px 0 12px; gap: 3px; background: #fff; border-radius: 7px; box-shadow: 0 1px 2px rgba(0, 0, 0, .4); }
.combo select { flex: 1; appearance: none; border: 0; padding: 0; background: none; font: inherit; color: #111; }
.combo .stepper { width: 21px; height: 22px; }
.ic21 { width: 21px; height: 21px; overflow: visible; }
.ic30 { width: 30px; height: 30px; overflow: visible; }

.work { display: grid; grid-template-columns: 512px minmax(0, 1fr); min-height: 0; }
.side { display: flex; flex-direction: column; min-height: 0; border-right: 2px solid #a9a9a9; }
.tabs { display: flex; justify-content: center; height: 28px; padding: 1px 0; font-size: 17px; }
.tabs.top { background: linear-gradient(#ececec 14px, #e3e3e3 14px); padding-left: 2px; }
.tabs.bottom { background: linear-gradient(#e3e3e3 12px, #ececec 12px); }
.tab { display: flex; align-items: center; background: #fff; box-shadow: 0 1px 1px rgba(0, 0, 0, .15); }
.tab:first-child { border-radius: 7px 0 0 7px; }
.tab.on { background: linear-gradient(#2b93ff, #0079ff); color: #fff; border-radius: 0 7px 7px 0; }
.top .tab { width: 79px; justify-content: center; padding-right: 3px; }
.top .tab.on { width: 135px; justify-content: flex-start; padding-left: 16px; gap: 9px; }
.bottom .tab { width: 98px; padding-left: 7px; gap: 8px; }
.bottom .tab.on { width: 240px; padding-left: 10px; gap: 12px; }
.x { width: 12px; height: 12px; }
.file { width: 16px; height: 21px; margin: 0 1px 0 8px; }

.dock { height: 25px; display: flex; align-items: center; gap: 11px; padding: 0 1px 0 8px; }
.dock h2 { flex: 1; text-align: center; font-size: 17px; padding-left: 10px; }
.mini { width: 21px; height: 21px; border: 1px solid #aaa; }
.mini svg { width: 19px; height: 19px; }
.frame { flex: 1; min-height: 0; overflow: hidden; display: flex; flex-direction: column; margin: 0 1px 0 2px; border: solid #b4b4b4; border-width: 2px 1px 0 1px; background: #d8dde5; }
.frame > * { flex: none; }
.closebtn { align-self: center; width: 84px; height: 27px; margin: 28px 0 33px; background: #fff; border-radius: 6px; box-shadow: 0 0 2px rgba(0, 0, 0, .35); font-size: 17px; line-height: 25px; padding-bottom: 2px; }
.frame h3 { display: flex; align-items: center; gap: 3px; height: 21px; margin: 0 0 27px 17px; font-size: 14px; font-weight: 700; color: #8690b0; }
.filters { display: flex; align-items: center; height: 34px; margin: 7px 33px 19px 50px; }
input[type=checkbox] { appearance: none; flex: none; width: 19px; height: 19px; margin: 0; border-radius: 5px; background: linear-gradient(#2b93ff, #0079ff); display: grid; place-items: center; }
input[type=checkbox]:checked::before { content: ""; width: 6px; height: 11px; margin-bottom: 3px; border: solid #fff; border-width: 0 3px 3px 0; transform: rotate(40deg); }
.filter { flex: 1; height: 34px; margin-left: 8px; border: 1px solid #a8a8a8; background: linear-gradient(#e4e4e4, #f8f8f8); font-size: 13px; }
.filters .chev { align-self: flex-end; width: 8px; height: 6px; margin-bottom: 3px; }
.sq { width: 37px; height: 34px; margin-left: 15px; display: grid; place-items: center; border: 1px solid #a8a8a8; background: linear-gradient(#eee, #f6f6f6); }
.sq.eye { width: 35px; }
.sq.eye { margin: 0 -2px 0 15px; }
.sq svg { width: 20px; height: 20px; }

.list { margin: 0 33px 0 48px; background: #fff; border: 1px solid #b8b8b8; border-bottom-color: #ddd; overflow: hidden; display: grid; grid-auto-rows: 37px 37px 38px; }
.constraints { height: 255px; margin-bottom: 41px; }
.list label { display: flex; align-items: center; height: 37px; }
.constraints label { padding-left: 9px; gap: 10px; }
.constraints .ic30 { margin-left: 8px; }
.elements label { padding-left: 8px; gap: 7px; }
.elements input { margin-right: 8px; }
.dash { width: 15px; height: 3px; margin: 0 7px 0 9px; background: #444e50; }

.doc { display: flex; flex-direction: column; min-width: 0; min-height: 0; }
.view { flex: 1; width: 100%; min-height: 0; }
.dim { font: 26px "Liberation Sans", sans-serif; fill: #ff2800; }
.front { font: 9px "Liberation Sans", sans-serif; fill: #aaa; text-anchor: middle; }
.axis { font: 8px "Liberation Sans", sans-serif; fill: #222; }
.status { height: 17px; border-top: 1px solid #999; background: linear-gradient(#ebebeb, #d4d4d4); }
```
